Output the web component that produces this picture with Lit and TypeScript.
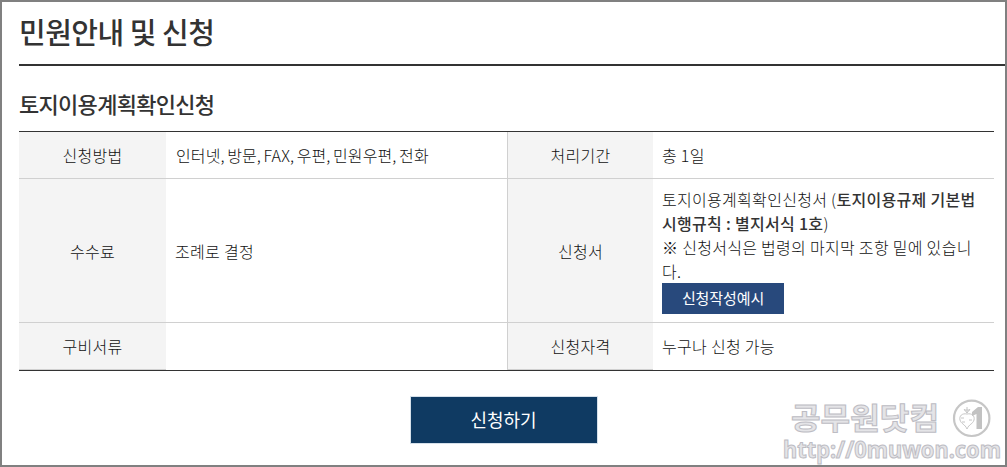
import { css, html, LitElement } from "lit";
import { customElement } from "lit/decorators.js";

@customElement("site-watermark")
export class SiteWatermarkElement extends LitElement {
  render() {
    return html`
      <svg width="223" height="74" viewBox="0 0 223 74">
        <text class="name" x="9" y="38" textLength="148" lengthAdjust="spacingAndGlyphs">공무원닷컴</text>
        <text class="url" x="1" y="67" textLength="218" lengthAdjust="spacingAndGlyphs">http://0muwon.com</text>
        <circle cx="189.7" cy="27.3" r="17.7" fill="#fff" stroke="#c6c6c6" stroke-width="2.2" />
        <path
          d="M185 23c-5-1-8 2-7 6 1 4 5 4 7 9 2-5 6-5 7-9 1-4-2-7-7-6zM185 22v-6M185 22l-3-4M185 22l3-4M182 19h6M179 27h3M187 29h3M180 31h3"
          fill="none"
          stroke="#c6c6c6"
          stroke-width="1"
        />
        <path d="M190 21l6-5h4v22h-5.500v-15l-4.500 2z" fill="#c2c2c2" />
      </svg>
    `;
  }

  static styles = css`
    :host {
      display: block;
    }

    svg {
      display: block;
      overflow: visible;
    }

    text {
      fill: #e4e4e7;
      stroke: #bdbcc3;
      stroke-width: 1;
      font-weight: 700;
    }

    .name {
      font-family: "Noto Sans CJK KR", sans-serif;
      font-size: 30px;
    }

    .url {
      font-family: "Noto Sans", "Open Sans", sans-serif;
      font-size: 23px;
    }
  `;
}

@customElement("app-root")
export class AppRootElement extends LitElement {
  render() {
    return html`
      <main>
        <h1>민원안내 및 신청</h1>
        <section>
          <h2>토지이용계획확인신청</h2>
          <div class="table">
            <div class="th">신청방법</div>
            <div class="td methods">인터넷, 방문, FAX, 우편, 민원우편, 전화</div>
            <div class="th split">처리기간</div>
            <div class="td">총 1일</div>

            <div class="th">수수료</div>
            <div class="td">조례로 결정</div>
            <div class="th split">신청서</div>
            <div class="td form">
              <p>토지이용계획확인신청서 (<b>토지이용규제 기본법</b></p>
              <p><b>시행규칙 : 별지서식 1호</b>)</p>
              <p>※ 신청서식은 법령의 마지막 조항 밑에 있습니</p>
              <p>다.</p>
              <button class="example">신청작성예시</button>
            </div>

            <div class="th last">구비서류</div>
            <div class="td last"></div>
            <div class="th split last">신청자격</div>
            <div class="td last">누구나 신청 가능</div>
          </div>
          <button class="apply">신청하기</button>
        </section>
        <site-watermark></site-watermark>
      </main>
    `;
  }

  static styles = css`
    :host {
      display: block;
      font-family: "Noto Sans CJK KR", sans-serif;
      color: #333;
    }

    main {
      position: relative;
      box-sizing: border-box;
      height: 467px;
      border: 2px solid #808080;
      padding-left: 17px;
      background: #fff;
    }

    h1,
    h2,
    p {
      margin: 0;
      white-space: nowrap;
    }

    h1 {
      box-sizing: border-box;
      height: 64px;
      border-bottom: 2px solid #333;
      font-size: 29px;
      font-weight: 500;
      letter-spacing: -0.5px;
      line-height: 58px;
    }

    section {
      display: flex;
      flex-direction: column;
      width: 975px;
    }

    h2 {
      height: 65px;
      font-size: 22px;
      font-weight: 500;
      letter-spacing: -0.7px;
      line-height: 74px;
    }

    .table {
      display: grid;
      grid-template-columns: 147px 341px 146px 341px;
      grid-template-rows: 47px 144px 47px;
      border-top: 1px solid #333;
      border-bottom: 1px solid #333;
      color: #111;
      font-size: 16px;
      font-weight: 300;
      letter-spacing: 0.3px;
      line-height: 24px;
    }

    .th,
    .td {
      display: flex;
      align-items: center;
      box-sizing: border-box;
      border-bottom: 1px solid #d0d0d0;
      white-space: nowrap;
    }

    .th {
      justify-content: center;
      background: #f4f4f4;
    }

    .th.split {
      border-left: 1px solid #d0d0d0;
    }

    .td {
      padding-left: 9px;
    }

    .td.methods {
      padding-left: 10px;
      letter-spacing: 0.1px;
      word-spacing: -1px;
    }

    .td.last {
      border-bottom: 0;
      padding-bottom: 1px;
    }

    .td.form {
      flex-direction: column;
      align-items: flex-start;
      padding-top: 8px;
    }

    b {
      color: #333;
      font-weight: 500;
    }

    button {
      border: 0;
      padding: 0;
      color: #fff;
      font-family: inherit;
      font-weight: 400;
    }

    .example {
      width: 122px;
      height: 31px;
      padding-bottom: 2px;
      background: #28497c;
      font-size: 15px;
      letter-spacing: -0.1px;
    }

    .apply {
      align-self: center;
      box-sizing: border-box;
      width: 188px;
      height: 48px;
      margin: 25px 0 0 -6px;
      border: 1px solid #d5e0ea;
      padding-bottom: 2px;
      background: #0f3a62;
      font-size: 18px;
      letter-spacing: -0.1px;
    }

    site-watermark {
      position: absolute;
      right: 0;
      bottom: 0;
    }
  `;
}
